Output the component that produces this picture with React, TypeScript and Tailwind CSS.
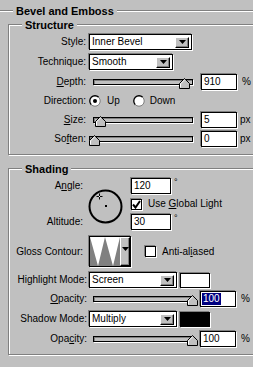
import type { ReactNode } from "react";

// Photoshop 6-era "Bevel and Emboss" layer-style panel, platinum chrome.

const SUNKEN = "border border-black shadow-[-1px_-1px_0_#808080,1px_1px_0_#fff]";
const RAISED = "border border-t-white border-l-white border-b-black border-r-black shadow-[inset_-1px_-1px_0_#808080]";
const ETCHED = "border border-[#808080] shadow-[inset_1px_1px_0_#fff,1px_1px_0_#fff]";

function Legend({ children, offset }: { children: ReactNode; offset: string }) {
  return (
    <legend className={`${offset} bg-[#c0c0c0] px-[3px] pt-[2px] text-[11px] font-bold leading-[12px]`}>{children}</legend>
  );
}

function DownArrow() {
  return (
    <svg width="7" height="4" viewBox="0 0 7 4" aria-hidden>
      <path d="M0 0 H7 L3.5 4 Z" fill="#000" />
    </svg>
  );
}

function Select({ value, width }: { value: string; width: string }) {
  return (
    <div className={`${width} ${SUNKEN} flex h-[16px] items-center bg-white pl-[2px] pr-[2px]`}>
      <span className="flex-1 truncate">{value}</span>
      <div className={`${RAISED} flex h-[11px] w-[14px] items-center justify-center bg-[#c0c0c0]`}>
        <DownArrow />
      </div>
    </div>
  );
}

function NumField({ value, width, selected }: { value: string; width: string; selected?: boolean }) {
  return (
    <div className={`${width} ${SUNKEN} flex h-[16px] items-center bg-white pl-[1px]`}>
      <span className={selected ? "bg-[#000080] px-[1px] leading-[12px] text-white" : "px-[1px]"}>{value}</span>
    </div>
  );
}

function Thumb() {
  return (
    <svg width="11" height="11" viewBox="0 0 11 11" aria-hidden>
      <path d="M0.5 10.5 V5.5 L5.5 0.5 L10.5 5.5 V10.5 Z" fill="#c0c0c0" stroke="#000" />
      <path d="M1.5 9.5 V5.9 L5.5 1.9" fill="none" stroke="#fff" />
    </svg>
  );
}

function Slider({ value, max, track }: { value: number; max: number; track: "short" | "long" }) {
  const w = track === "long" ? 104 : 100;
  const left = Math.round((value / max) * (w - 6)) - 1;
  return (
    <div className="flex w-[104px] justify-end">
      <div className={`relative h-[6px] ${track === "long" ? "w-[104px]" : "w-[100px]"} border border-black bg-[#c0c0c0] shadow-[inset_1px_1px_0_#808080,1px_1px_0_#fff]`}>
        <div className="absolute top-[-2px]" style={{ left }}>
          <Thumb />
        </div>
      </div>
    </div>
  );
}

function Radio({ checked }: { checked?: boolean }) {
  return (
    <svg width="12" height="12" viewBox="0 0 12 12" aria-hidden>
      <circle cx="6" cy="6" r="5" fill="#fff" />
      <path d="M2.3 9.7 A5.2 5.2 0 0 1 9.7 2.3" fill="none" stroke="#000" strokeWidth="1.3" />
      <path d="M9.7 2.3 A5.2 5.2 0 0 1 2.3 9.7" fill="none" stroke="#808080" strokeWidth="1" />
      {checked && <circle cx="6" cy="6" r="2" fill="#000" />}
    </svg>
  );
}

function Checkbox({ checked }: { checked?: boolean }) {
  return (
    <div className={`${SUNKEN} flex h-[11px] w-[11px] items-center justify-center bg-white`}>
      {checked && (
        <svg width="9" height="9" viewBox="0 0 9 9" aria-hidden>
          <path d="M1 4.5 L3.5 7.5 L8 1" fill="none" stroke="#000" strokeWidth="2" />
        </svg>
      )}
    </div>
  );
}

function AngleDial({ angle }: { angle: number }) {
  const r = (angle * Math.PI) / 180;
  const x = 17 + 11 * Math.cos(r);
  const y = 17 - 11 * Math.sin(r);
  return (
    <svg width="35" height="35" viewBox="0 0 35 35" aria-hidden>
      <circle cx="17.5" cy="17.5" r="16" fill="none" stroke="#000" strokeWidth="2" />
      <rect x="17" y="16" width="2" height="2" fill="#000" />
      <path d={`M${x - 3} ${y} H${x + 3} M${x} ${y - 3} V${y + 3}`} stroke="#000" strokeWidth="1" />
      <rect x={x - 0.5} y={y - 0.5} width="1" height="1" fill="#fff" />
    </svg>
  );
}

function ContourPicker() {
  return (
    <div className={`${SUNKEN} flex h-[31px] w-[42px] bg-white`}>
      <svg width="30" height="29" viewBox="0 0 30 29" aria-hidden>
        <polygon points="0,0 8,29 15,0 23,29 30,0 30,29 0,29" fill="#808080" />
      </svg>
      <div className={`${RAISED} flex flex-1 items-start justify-center bg-[#c0c0c0] pt-[9px]`}>
        <DownArrow />
      </div>
    </div>
  );
}

function Mn({ children }: { children: ReactNode }) {
  return <span className="underline underline-offset-1">{children}</span>;
}

function Row({ label, h, labelW = "w-[77px]", gap = "ml-[3px]", children }: { label: ReactNode; h: string; labelW?: string; gap?: string; children: ReactNode }) {
  return (
    <div className={`flex items-center ${h}`}>
      <div className={`${labelW} whitespace-nowrap text-right`}>{label}</div>
      <div className={`${gap} flex items-center`}>{children}</div>
    </div>
  );
}

export default function App() {
  return (
    <div className="h-[367px] w-[253px] overflow-hidden bg-[#c0c0c0] font-['Liberation_Sans',Arial,sans-serif] text-[10px] leading-none text-black">
      <fieldset className={`-ml-[4px] mt-[3px] h-[420px] w-[280px] ${ETCHED}`}>
        <Legend offset="ml-[16px]">Bevel and Emboss</Legend>

        <fieldset className={`ml-[11px] w-[275px] pb-[5px] pt-[1px] ${ETCHED}`}>
          <Legend offset="ml-[13px]">Structure</Legend>
          <Row label="Style:" h="h-[20px]">
            <Select value="Inner Bevel" width="w-[103px]" />
          </Row>
          <Row label="Technique:" h="h-[20px]">
            <Select value="Smooth" width="w-[84px]" />
          </Row>
          <Row label={<><Mn>D</Mn>epth:</>} h="h-[20px]">
            <Slider value={910} max={1000} track="short" />
            <div className="ml-[8px]"><NumField value="910" width="w-[36px]" /></div>
            <span className="ml-[5px]">%</span>
          </Row>
          <Row label="Direction:" h="h-[18px]">
            <Radio checked />
            <span className="ml-[6px]">Up</span>
            <div className="ml-[13px]"><Radio /></div>
            <span className="ml-[5px]">Down</span>
          </Row>
          <Row label={<><Mn>S</Mn>ize:</>} h="h-[19px]">
            <Slider value={5} max={250} track="short" />
            <div className="ml-[8px]"><NumField value="5" width="w-[36px]" /></div>
            <span className="ml-[3px]">px</span>
          </Row>
          <Row label={<>So<Mn>f</Mn>ten:</>} h="h-[20px]">
            <Slider value={0} max={250} track="long" />
            <div className="ml-[8px]"><NumField value="0" width="w-[36px]" /></div>
            <span className="ml-[3px]">px</span>
          </Row>
        </fieldset>

        <fieldset className={`ml-[11px] mt-[6px] w-[275px] pb-[5px] ${ETCHED}`}>
          <Legend offset="ml-[13px]">Shading</Legend>
          <div className="flex">
            <div className="flex w-[74px] flex-col items-end pt-[3px]">
              <div className="flex h-[16px] items-center">A<Mn>n</Mn>gle:</div>
              <div className="h-[20px]" />
              <div className="flex h-[16px] items-center">Altitude:</div>
            </div>
            <div className="ml-[5px] pt-[14px]">
              <AngleDial angle={120} />
            </div>
            <div className="ml-[8px] flex flex-col pt-[3px]">
              <div className="flex items-start">
                <NumField value="120" width="w-[40px]" />
                <span className="ml-[3px] text-[9px]">°</span>
              </div>
              <div className="flex h-[20px] items-center">
                <Checkbox checked />
                <span className="ml-[6px]">Use <Mn>G</Mn>lobal Light</span>
              </div>
              <div className="flex items-start">
                <NumField value="30" width="w-[40px]" />
                <span className="ml-[3px] text-[9px]">°</span>
              </div>
            </div>
          </div>

          <div className="mt-[6px]">
            <Row label="Gloss Contour:" h="h-[31px]" labelW="w-[74px]" gap="ml-[6px]">
              <ContourPicker />
              <div className="ml-[14px]"><Checkbox /></div>
              <span className="ml-[6px]">Anti-al<Mn>i</Mn>ased</span>
            </Row>
          </div>

          <div className="mt-[4px]">
            <Row label="Highlight Mode:" h="h-[18px]" labelW="w-[78px]" gap="ml-[2px]">
              <Select value="Screen" width="w-[88px]" />
              <div className={`ml-[3px] h-[15px] w-[30px] bg-white ${SUNKEN}`} />
            </Row>
            <Row label={<><Mn>O</Mn>pacity:</>} h="h-[20px]" labelW="w-[78px]" gap="ml-[2px]">
              <Slider value={100} max={100} track="short" />
              <div className="ml-[7px]"><NumField value="100" width="w-[36px]" selected /></div>
              <span className="ml-[5px]">%</span>
            </Row>
            <Row label="Shadow Mode:" h="h-[20px]" labelW="w-[78px]" gap="ml-[2px]">
              <Select value="Multiply" width="w-[88px]" />
              <div className={`ml-[3px] h-[15px] w-[30px] bg-black ${SUNKEN}`} />
            </Row>
            <Row label={<>Opa<Mn>c</Mn>ity:</>} h="h-[20px]" labelW="w-[78px]" gap="ml-[2px]">
              <Slider value={100} max={100} track="short" />
              <div className="ml-[7px]"><NumField value="100" width="w-[36px]" /></div>
              <span className="ml-[5px]">%</span>
            </Row>
          </div>
        </fieldset>
      </fieldset>
    </div>
  );
}
